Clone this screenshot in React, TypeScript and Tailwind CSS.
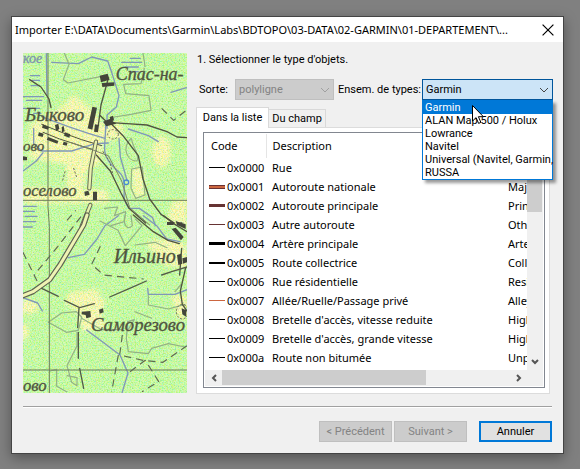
import React from "react";

const ui = "font-['Roboto','Liberation_Sans',sans-serif] text-[11px]";
const segoe = "font-['Noto_Sans','Open_Sans',sans-serif] text-[11px]";

const types = [
  "Garmin",
  "ALAN Map 500 / Holux",
  "Lowrance",
  "Navitel",
  "Universal (Navitel, Garmin,",
  "RUSSA",
];

type Row = { code: string; label: string; english: string; line: string };

const rows: Row[] = [
  { code: "0x0000", label: "Rue", english: "", line: "h-px bg-black" },
  { code: "0x0001", label: "Autoroute nationale", english: "Major", line: "h-1 bg-[#cc6640] border-y border-[#6b3232]" },
  { code: "0x0002", label: "Autoroute principale", english: "Princ", line: "h-[3px] bg-[#663333]" },
  { code: "0x0003", label: "Autre autoroute", english: "Other", line: "h-px bg-[#663333]" },
  { code: "0x0004", label: "Artère principale", english: "Arteri", line: "h-[3px] bg-black" },
  { code: "0x0005", label: "Route collectrice", english: "Collec", line: "h-[2px] bg-black" },
  { code: "0x0006", label: "Rue résidentielle", english: "Resid", line: "h-px bg-black" },
  { code: "0x0007", label: "Allée/Ruelle/Passage privé", english: "Alley", line: "h-px bg-[#cc6640]" },
  { code: "0x0008", label: "Bretelle d'accès, vitesse reduite", english: "High", line: "h-px bg-black" },
  { code: "0x0009", label: "Bretelle d'accès, grande vitesse", english: "High", line: "h-px bg-black" },
  { code: "0x000a", label: "Route non bitumée", english: "Unpa", line: "h-px bg-black" },
];

function Chevron({ d, className }: { d: string; className: string }) {
  return (
    <svg viewBox="0 0 10 10" className={className} fill="none" stroke="currentColor" aria-hidden="true">
      <path d={d} />
    </svg>
  );
}

function MapPicture() {
  return (
    <svg
      viewBox="24 24 492 1020"
      className="block h-[340px] w-[164px] shrink-0"
      role="img"
      aria-label="Carte topographique"
      fill="none"
      strokeLinecap="round"
      strokeLinejoin="round"
    >
      <defs>
        <filter id="grain" x="0" y="0" width="100%" height="100%" colorInterpolationFilters="sRGB">
          <feTurbulence type="fractalNoise" baseFrequency="0.25" numOctaves="2" seed="4" />
          <feComponentTransfer>
            <feFuncR type="linear" slope="3" intercept="-0.65" />
            <feFuncG type="linear" slope="1" intercept="0.45" />
            <feFuncB type="linear" slope="3" intercept="-0.85" />
            <feFuncA type="linear" slope="0" intercept="0.26" />
          </feComponentTransfer>
        </filter>
        <filter id="soft" x="-20%" y="-20%" width="140%" height="140%" colorInterpolationFilters="sRGB">
          <feGaussianBlur stdDeviation="7" />
        </filter>
      </defs>
      <rect x="24" y="24" width="492" height="1020" fill="#c4fca4" />
      <g fill="#fff9b4" filter="url(#soft)">
        <path d="M176 150l55 42 30 45 60-5 5 45-60 15-10 60-40 25-15 80-40-10-10-90-107-15V240l90-50z" />
        <ellipse cx="440" cy="320" rx="28" ry="46" />
        <path d="M350 370h35l5 85h-35zM24 425l250 10 10 40H24zM470 470l46-10v80l-60-10z" />
        <path d="M390 590l80-10 46 20v70l-70-10zM160 745l80-15 30 40-10 40 10 40-70 10-10-60-40-25z" />
        <ellipse cx="40" cy="785" rx="30" ry="22" />
        <ellipse cx="24" cy="860" rx="18" ry="24" />
        <path d="M470 750h46v70h-30z" />
      </g>
      <rect x="24" y="24" width="492" height="1020" filter="url(#grain)" />

      <g stroke="#8098b8" strokeWidth="4">
        <path d="M110 52l80 4 40-20 48 12 12 34 22 70-8 34-28 24v40" />
        <path d="M24 155h62M34 166h46M46 92h28M50 106h24M48 122h26M24 190h50M56 205h22M320 52h60M330 66h40M346 40h30M350 80h20M468 142l46-14" />
        <path d="M94 26l2 126M56 250v46l24 22 90 0 70-22 40-2M24 378l40-30 20-25M80 215l80 30 60 20 50 15" />
        <path d="M272 240c0 60-12 80 10 110s40 30 45 60-10 50 16 80h30l40 28 8 24" />
        <path d="M312 280l4 56 20 70M340 252l60 20 30 18" />
        <path d="M26 484h38M24 499h34M30 514h36M24 530h38M24 546h28M24 758l44 16 14 24M215 855l100 75 24 54-18 60" />
        <path d="M310 512l-40 30-24 40-38 46-48 10M385 512l40 30 30 40 40 8M398 730l2 18 80 0 36-14" />
      </g>
      <g stroke="#93b184" strokeWidth="3.5">
        <path d="M148 24l14 34-17 46 14 10 112-22M388 70l-10 46-52 2 6 28 70 6 6 44-60 12-50 8-16 24M384 24l6 40" />
        <path d="M348 280c-30 30-10 70 18 68 10-20-14-40-16-66M350 372l32-6 8 84-28 10-14-30zM268 490l40-4-10 26 34-12-4 30-40 12" />
        <path d="M255 528l54 28 22 46 50-60-20-20M330 512c-8 30 10 45 22 30l-4-30M360 600l60-8 36 16M480 740l18-22M400 752v28l60 12 50-14" />
        <path d="M100 832l40-28 44-4 16 16-10 40-36 6-54-30M186 862v40l-30 60 14 50 16 10v-24l-30-6M105 978l20-4v50l30 16M340 920l-6-40 4-50 20-6-22 36M340 920l60 6 10-16 50-14 50 10M200 820l60 34 60 0M360 800l50 20" />
      </g>

      <path d="M99 24v460l4 60v500M24 466h492M24 975h492" stroke="#6d7d5c" strokeWidth="3" />
      <g stroke="#50543f" strokeWidth="4">
        <path d="M44 104l34 22 24 36 6 26M280 100l-22 80-8 60M256 212l20 20 60 4 60 4 60 20 30 16 30 2" />
        <path d="M284 232l40 40 46 60 14 70 20 60 34 46 40 26M244 330l42 48 32 66 24 46 50 44" />
        <path d="M80 238l70 28 50 18 60 18M84 262l50 20 80 26 30 8" strokeWidth="3" />
        <path d="M355 510l60 50 44 26 34 10M446 512l30 24 40 24M494 690l6-80M512 668l-16 70 6 40 14 20" />
      </g>
      <path d="M243 290l-16 80-4 60M226 480l-26 64" stroke="#676c55" strokeWidth="13" />
      <path d="M243 290l-16 80-4 60M226 480l-26 64" stroke="#e8f2ae" strokeWidth="7" />
      <path d="M216 510l-10 30-70 118-32 46-50 36-36 14" stroke="#5c6150" strokeWidth="16" />
      <path d="M216 510l-10 30-70 118-32 46-50 36-36 14" stroke="#eff3b4" strokeWidth="9" />
      <path d="M166 292l70 24 44 16 40 76 24 80 60 52" stroke="#7c8468" strokeWidth="3" />
      <g stroke="#5f6a50" strokeWidth="3.5" strokeDasharray="22 15" strokeLinecap="butt">
        <path d="M198 515l-70 90-70 84M24 622l44 90M256 604l-26 54 36 32 120 12M440 190l36 36 40-32M156 526l26-30" />
        <path d="M322 870l-8 60 70 16 60 6 72-50M310 930l-20 110M345 980l46-34 40 64-50 30" />
      </g>
      <path d="M80 730l50 24M148 766l46 22 44-12M284 756l60-26 50-22M440 690l30-10 46-14M192 788l-4 60M190 862v78M194 970l12 60" stroke="#545c48" strokeWidth="4" />
      <g fill="#43453a">
        <path d="M254 92l24-6 6 18-26 8zM260 114l38-2v10l-36 4zM232 185l14 3-14 66-14-4zM240 238l12 2-3 22-12-2zM264 230l20-8 20 14-30 8zM284 216l10-4 3 14-10 4zM84 238l18 8-3 8-18-6zM72 262l14 4-3 10-14-4zM100 276l30 12-3 8-32-12zM146 290l12 3-3 9-12-3zM150 262l16 6-3 10-16-6zM120 240l10-4 3 16-10 6zM140 246l6-3 3 16-8 3z" />
        <path d="M208 440l12-3 4 12-14 4zM234 440h12v26h-12zM24 334l12 2v10H24zM200 800l26-2 2 18-14 4-2-10-12-2zM252 794l12-4 2 12-12 4zM470 552l12-4 24 28-8 10zM482 528l30 10v14l-26-12zM486 630l12-4 4 30-12 4zM502 640l14-4v16l-12 4zM500 790l14 6v20l-12-8zM456 531h20v9h-20zM486 532h16v8h-16z" />
      </g>
      <g stroke="#6a7054" strokeWidth="3" strokeDasharray="4 7">
        <ellipse cx="294" cy="268" rx="16" ry="14" />
        <ellipse cx="502" cy="800" rx="18" ry="22" />
        <path d="M150 380l-8 30M176 370l10 30M264 320l20 30 10 40" />
      </g>
      <circle cx="334" cy="412" r="7" stroke="#4b8cd0" strokeWidth="4" />

      <g className="font-['Liberation_Serif',serif] italic" fill="#50543f" stroke="#50543f" strokeWidth="1">
        <text x="24" y="54" fontSize="42" fill="#7d92b0" stroke="#7d92b0">кое</text>
        <text x="302" y="106" fontSize="54">Спас-на-</text>
        <text x="30" y="227" fontSize="57">Быково</text>
        <text x="24" y="318" fontSize="45">ово</text>
        <text x="24" y="454" fontSize="50">оселово</text>
        <text x="296" y="655" fontSize="60">Ильино</text>
        <text x="228" y="859" fontSize="56">Саморезово</text>
        <text x="24" y="1037" fontSize="50">ово</text>
      </g>
    </svg>
  );
}

function TypeDropdown() {
  return (
    <div className="relative min-w-0 flex-1">
      <select
        id="types"
        defaultValue="Garmin"
        className="block h-[21px] w-full appearance-none border border-[#00559b] bg-[#cce4f7] pl-[3px] pr-5 text-black outline-none"
      >
        {types.map((t) => (
          <option key={t}>{t}</option>
        ))}
      </select>
      <Chevron d="M1 3l4 4 4-4" className="pointer-events-none absolute right-1 top-[6px] h-[10px] w-[10px] text-[#444]" />
      <ul
        role="listbox"
        aria-label="Ensem. de types"
        className="absolute inset-x-0 top-full z-10 border border-[#0078d7] bg-white shadow-[3px_3px_3px_rgba(0,0,0,0.4)]"
      >
        {types.map((t, i) => (
          <li
            key={t}
            role="option"
            aria-selected={i === 0}
            className={
              i === 0
                ? "h-[13px] whitespace-nowrap bg-[#0078d7] pl-[2px] leading-[14px] text-white"
                : "h-[13px] whitespace-nowrap pl-[2px] leading-[14px]"
            }
          >
            {t}
          </li>
        ))}
      </ul>
      <svg viewBox="0 0 12 19" className="absolute left-[50px] top-[26px] z-20 h-[19px] w-3" aria-hidden="true">
        <path d="M.5.5v15.6l3.6-3.5 2.5 5.8 2.3-1-2.5-5.7h5z" fill="#fff" stroke="#000" />
      </svg>
    </div>
  );
}

function TypeList() {
  return (
    <div className="border border-[#828790] bg-white p-px">
      <div className="flex">
        <div className="h-[236px] min-w-0 flex-1 overflow-hidden">
          <table className={`${segoe} w-[420px] table-fixed border-collapse whitespace-nowrap text-left leading-[18px]`}>
            <colgroup>
              <col className="w-[61px]" />
              <col className="w-[236px]" />
              <col />
            </colgroup>
            <thead>
              <tr className="h-6">
                <th className="border-r border-[#e5e5e5] p-0 pl-[6px] font-normal">Code</th>
                <th className="border-r border-[#e5e5e5] p-0 pl-[6px] font-normal">Description</th>
                <th className="p-0" aria-label="English" />
              </tr>
            </thead>
            <tbody>
              {rows.map((r) => (
                <tr key={r.code} className="h-[19px]">
                  <td className="p-0 pl-1">
                    <span className="flex items-center gap-[2px]">
                      <span className={`${r.line} w-4 shrink-0`} />
                      {r.code}
                    </span>
                  </td>
                  <td className="p-0 pl-[6px]">{r.label}</td>
                  <td className="p-0 pl-[6px]">{r.english}</td>
                </tr>
              ))}
            </tbody>
          </table>
        </div>
        <div className="flex w-4 shrink-0 flex-col bg-[#f0f0f0] text-[#555]">
          <button aria-label="Monter" className="flex h-[17px] items-center justify-center">
            <Chevron d="M1 7l4-4 4 4" className="h-[10px] w-[10px] stroke-2" />
          </button>
          <span className="h-[61px] w-[15px] bg-[#cdcdcd]" />
          <button aria-label="Descendre" className="mt-auto flex h-[17px] items-center justify-center">
            <Chevron d="M2 3l3 3 3-3" className="h-[10px] w-[10px] stroke-2" />
          </button>
        </div>
      </div>
      <div className="flex h-4 bg-[#f0f0f0] pr-4 text-[#555]">
        <button aria-label="Gauche" className="flex w-[17px] items-center justify-center">
          <Chevron d="M7 2L4 5l3 3" className="h-[10px] w-[10px] stroke-2" />
        </button>
        <span className="h-[15px] w-[204px] bg-[#cdcdcd]" />
        <button aria-label="Droite" className="ml-auto flex w-[17px] items-center justify-center">
          <Chevron d="M3 2l3 3-3 3" className="h-[10px] w-[10px] stroke-2" />
        </button>
      </div>
    </div>
  );
}

export default function App() {
  return (
    <div className="min-h-screen bg-[#808080] pb-4 pl-[11px] pr-4 pt-4">
      <main className={`${ui} border border-[#444] bg-[#f0f0f0] leading-[14px] text-black shadow-[0_4px_12px_rgba(0,0,0,0.35)]`}>
        <header className={`${segoe} flex h-[25px] items-center justify-between bg-white pl-[3px] pr-[9px]`}>
          <h1 className="truncate">Importer E:\DATA\Documents\Garmin\Labs\BDTOPO\03-DATA\02-GARMIN\01-DEPARTEMENT\...</h1>
          <button aria-label="Fermer" className="shrink-0">
            <Chevron d="M.5.5l9 9M9.500.5l-9 9" className="h-3 w-3" />
          </button>
        </header>

        <div className="flex gap-[9px] pl-[11px] pr-[10px] pt-[11px]">
          <MapPicture />
          <section className="min-w-0 flex-1">
            <p className="pl-px">1. Sélectionner le type d'objets.</p>
            <div className="mt-3 flex items-center pl-[3px]">
              <label htmlFor="kind" className="w-9">Sorte:</label>
              <div className="relative">
                <select
                  id="kind"
                  disabled
                  className="block h-[21px] w-[99px] appearance-none border border-[#bfbfbf] bg-[#cccccc] pl-[3px] text-[#838383] opacity-100"
                >
                  <option>polyligne</option>
                </select>
                <Chevron d="M1 3l4 4 4-4" className="pointer-events-none absolute right-1 top-[6px] h-[10px] w-[10px] text-[#a0a0a0]" />
              </div>
              <label htmlFor="types" className="w-[88px] whitespace-nowrap pl-1">Ensem. de types:</label>
              <TypeDropdown />
            </div>

            <div role="tablist" className="mt-[7px] flex items-end">
              <button role="tab" aria-selected="true" className="-mb-px h-[21px] w-[73px] border border-b-0 border-[#d9d9d9] bg-white pb-px">
                Dans la liste
              </button>
              <button role="tab" aria-selected="false" className="h-[18px] w-[57px] border border-b-0 border-l-0 border-[#d9d9d9]">
                Du champ
              </button>
            </div>
            <div className="mr-[3px] border border-[#dcdcdc] bg-white pb-[5px] pl-[6px] pr-1 pt-1">
              <TypeList />
            </div>
          </section>
        </div>

        <footer className="px-[11px] pb-[11px] pt-3">
          <hr className="border-b border-t border-b-white border-t-[#a0a0a0]" />
          <div className="mt-[13px] flex justify-end">
            <button disabled className="h-[21px] w-[73px] border border-[#bfbfbf] bg-[#cccccc] text-[#838383]">&lt; Précédent</button>
            <button disabled className="ml-[2px] h-[21px] w-[73px] border border-[#bfbfbf] bg-[#cccccc] text-[#838383]">Suivant &gt;</button>
            <button className="ml-3 h-[21px] w-[73px] border-2 border-[#0078d7] bg-[#e1e1e1]">Annuler</button>
          </div>
        </footer>
      </main>
    </div>
  );
}
